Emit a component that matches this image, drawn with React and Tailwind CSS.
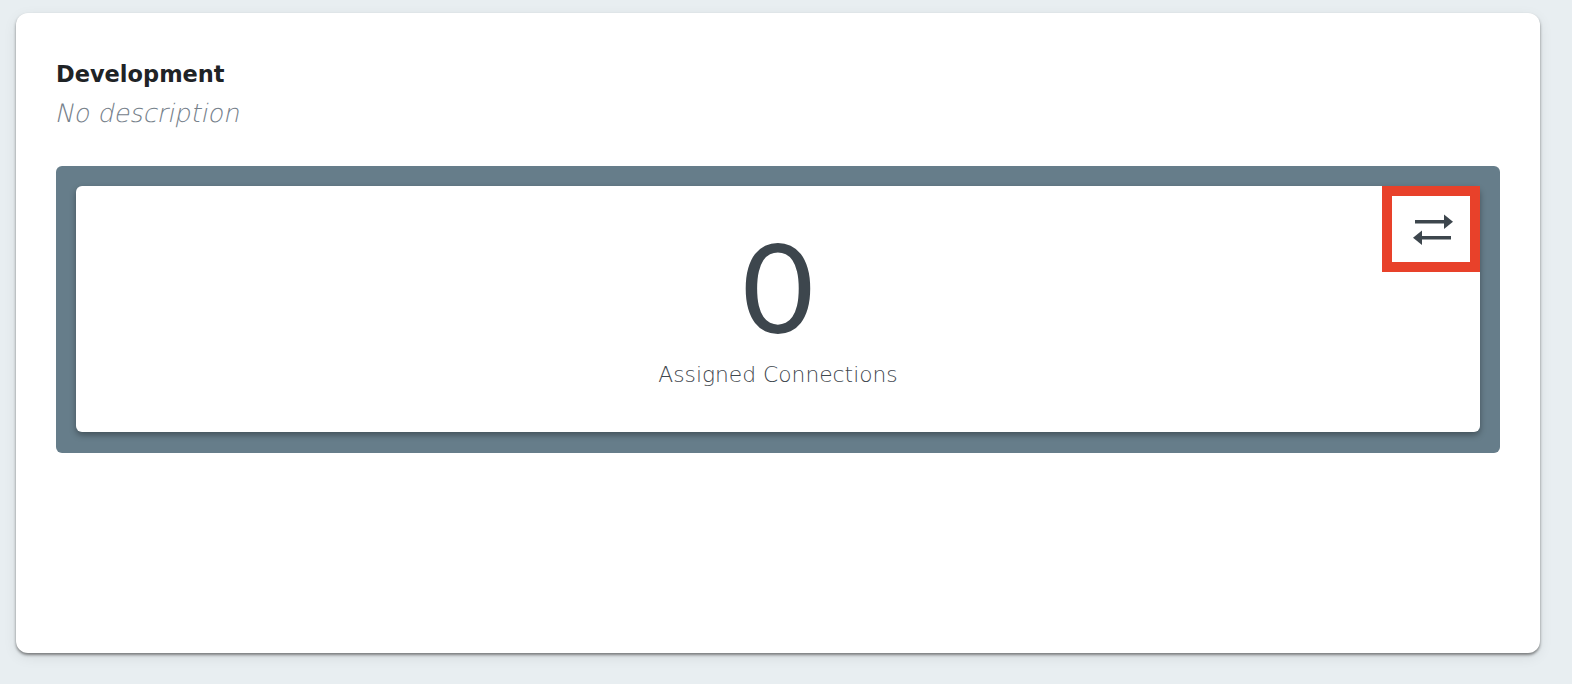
import React from "react";

export default function App() {
  return (
    <div className="w-[1572px] h-[684px] bg-[#e8eef1] pt-[13px] pl-[16px]" style={{ fontFamily: "'DejaVu Sans', sans-serif" }}>
      <div className="w-[1524px] h-[640px] bg-white rounded-[12px] shadow-[0_2px_3px_rgba(0,0,0,0.45),0_4px_14px_rgba(0,0,0,0.08)] pt-[47px] px-[40px]">
        <div className="text-[22.5px] font-bold text-[#1f2326] leading-[28px]">Development</div>
        <div className="mt-[9px] h-[32px] leading-[32px]">
          <span className="inline-block -skew-x-12 origin-bottom-left text-[25.5px] font-extralight text-[#76818b] ml-[-3px]">No description</span>
        </div>
        <div className="mt-[37px] h-[287px] bg-[#667d8a] rounded-[6px] p-[20px]">
          <div className="relative h-[246px] bg-white rounded-[6px] shadow-[0_3px_6px_rgba(0,0,0,0.35)] flex flex-col items-center">
            <div className="text-[124px] leading-[124px] font-normal text-[#3d464d] mt-[37px]" style={{ fontFamily: "Lato, sans-serif" }}>0</div>
            <div className="text-[21.8px] font-light text-[#3f474e] mt-[15px] leading-[26px]">Assigned Connections</div>
            <div className="absolute right-0 top-0 w-[98px] h-[86px] border-[10px] border-[#e8412a] flex items-center justify-center">
              <svg width="42" height="34" viewBox="0 0 42 34" className="ml-[4px]">
                <rect x="3" y="8" width="33" height="3.5" fill="#3d464d" />
                <polygon points="32,2.5 41,9.75 32,17" fill="#3d464d" />
                <rect x="6" y="24" width="33" height="3.5" fill="#3d464d" />
                <polygon points="10,18.5 1,25.75 10,33" fill="#3d464d" />
              </svg>
            </div>
          </div>
        </div>
      </div>
    </div>
  );
}
